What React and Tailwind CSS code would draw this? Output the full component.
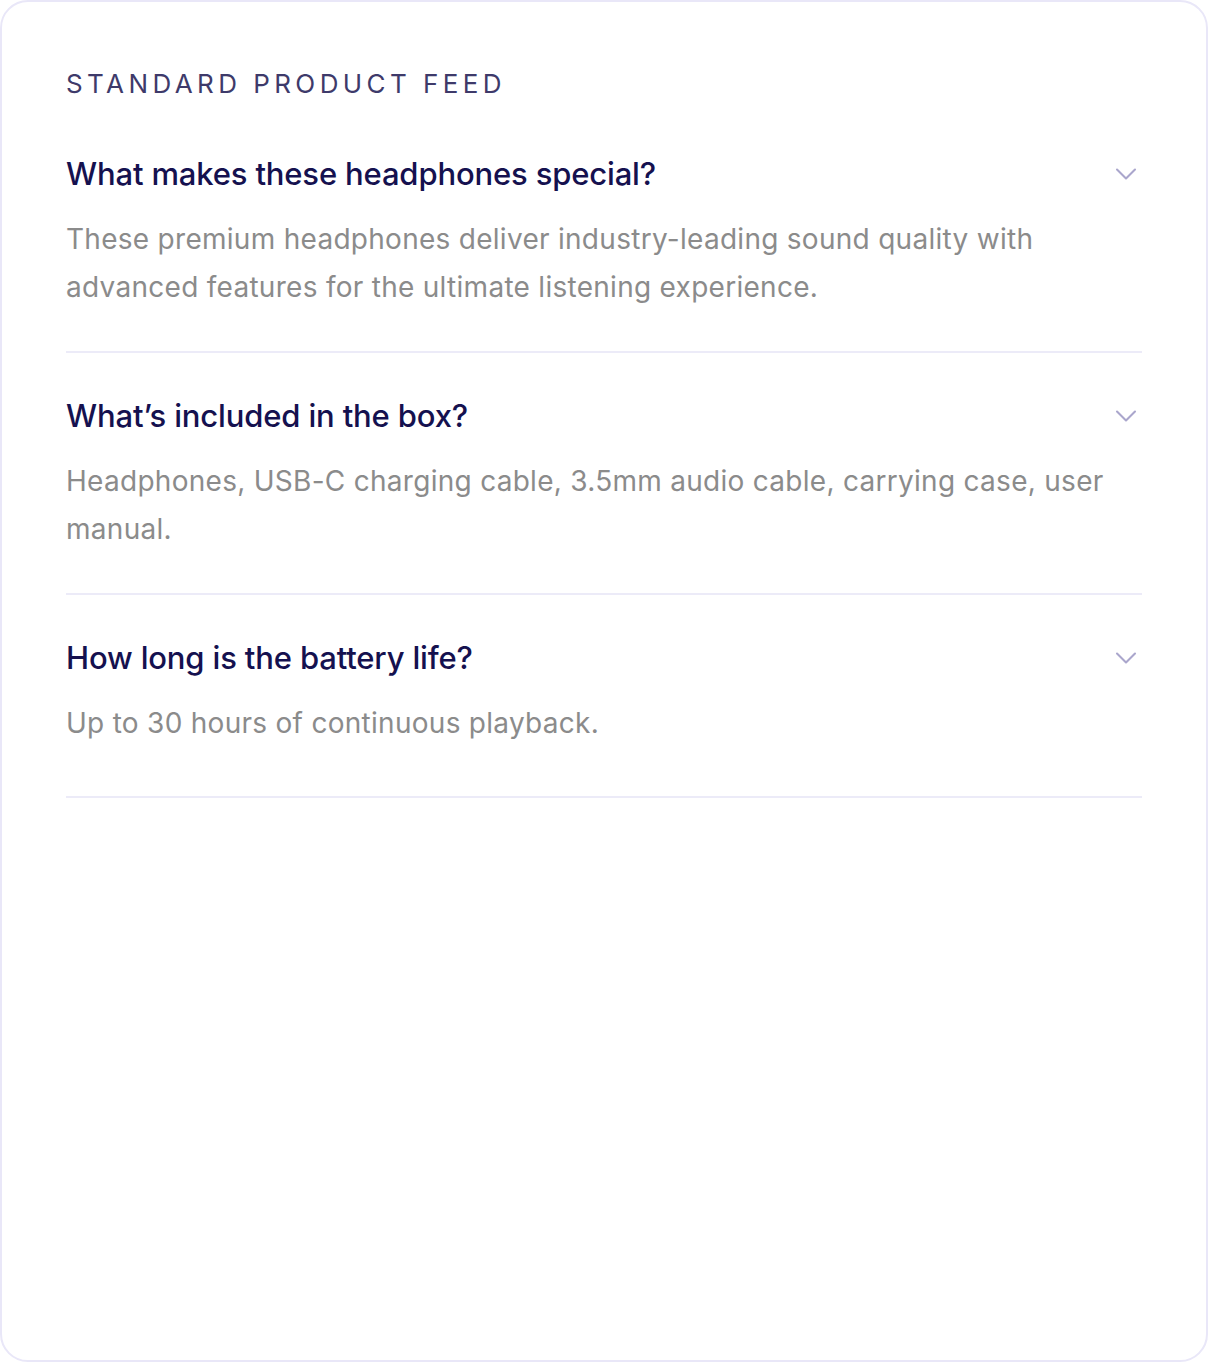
import React from "react";
import { ChevronDown } from "lucide-react";

const faqs = [
  {
    q: "What makes these headphones special?",
    a: "These premium headphones deliver industry-leading sound quality with advanced features for the ultimate listening experience.",
  },
  {
    q: "What’s included in the box?",
    a: "Headphones, USB-C charging cable, 3.5mm audio cable, carrying case, user manual.",
  },
  {
    q: "How long is the battery life?",
    a: "Up to 30 hours of continuous playback.",
  },
];

const App = () => {
  return (
    <div
      className="w-[1208px] h-[1362px] bg-white"
      style={{ fontFamily: "Inter, 'Open Sans', sans-serif" }}
    >
      <div className="w-full h-full rounded-[28px] border-2 border-[#e9e7f8] bg-white pt-[62px] px-[64px]">
        <h3 className="h-[40px] leading-[40px] text-[26px] tracking-[0.17em] text-[#3e3a6a] mb-[7px]">
          STANDARD PRODUCT FEED
        </h3>

        <div>
          {faqs.map((item, i) => (
            <div
              key={item.q}
              className={`border-b-2 border-[#ecebf8] pt-[43px] ${i === faqs.length - 1 ? "pb-[49px]" : "pb-[40px]"}`}
            >
              <div className="flex items-center justify-between h-[40px]">
                <span className="text-[31px] font-medium text-[#15114f] leading-[40px] tracking-[-0.005em]">
                  {item.q}
                </span>
                <ChevronDown size={36} strokeWidth={1.4} className="text-[#aaa6cc] -mr-[2px]" />
              </div>
              <p className="mt-[21px] text-[28px] leading-[48px] text-[#8b8b8b] tracking-[0.01em]">
                {item.a}
              </p>
            </div>
          ))}
        </div>
      </div>
    </div>
  );
};

export default App;
